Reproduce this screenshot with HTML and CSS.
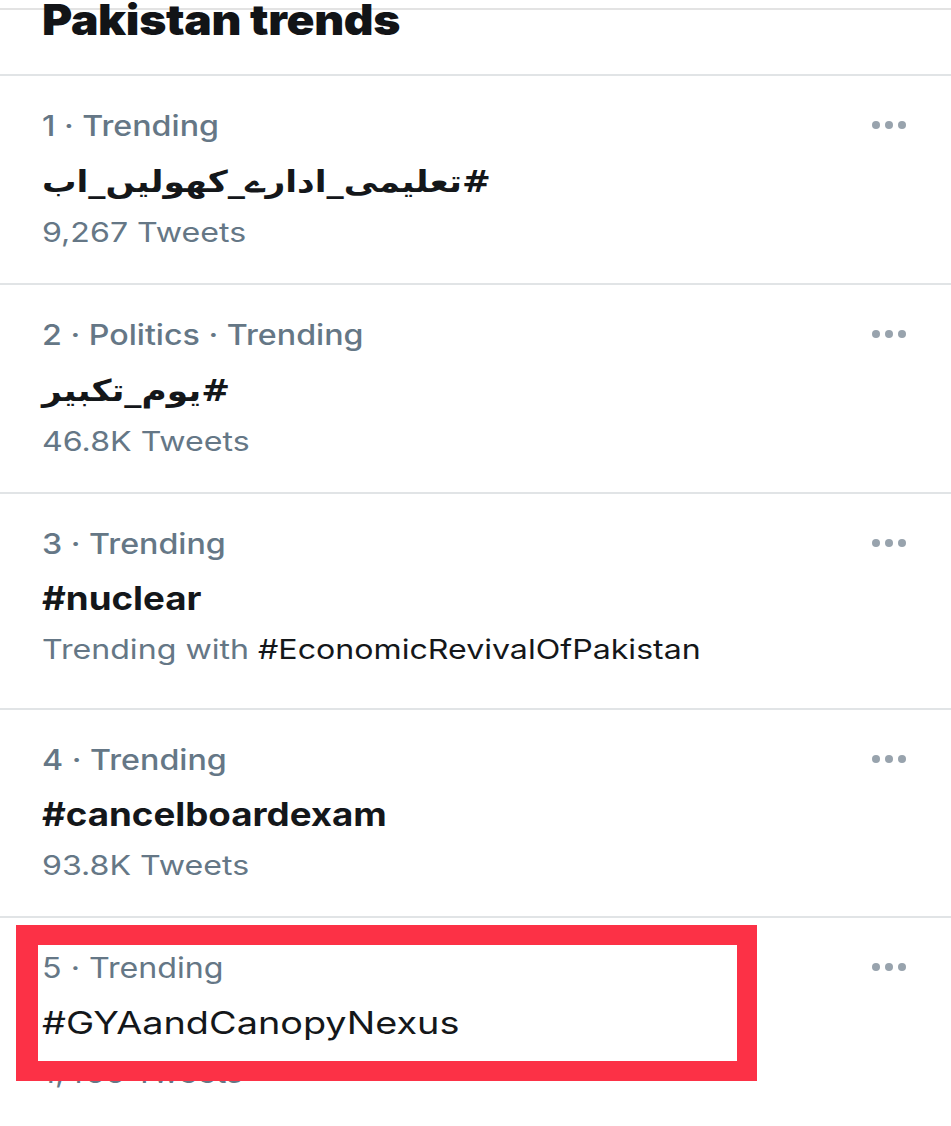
FILE: index.html
```html
<!DOCTYPE html>
<html lang="en">
<head>
<meta charset="utf-8">
<title>Pakistan trends</title>
<link rel="stylesheet" href="styles.css">
</head>
<body>
<div class="topline"></div>
<header class="header">
  <h1 class="title">Pakistan trends</h1>
</header>
<ul class="trends">
  <li class="trend">
    <div class="trend-body">
      <div class="meta">1 · Trending</div>
      <div class="tag"><span class="rtl" dir="rtl">#تعلیمی_ادارے_کھولیں_اب</span></div>
      <div class="count">9,267 Tweets</div>
    </div>
    <div class="more"><span></span><span></span><span></span></div>
  </li>
  <li class="trend">
    <div class="trend-body">
      <div class="meta">2 · Politics · Trending</div>
      <div class="tag"><span class="rtl" dir="rtl">#یوم_تکبیر</span></div>
      <div class="count">46.8K Tweets</div>
    </div>
    <div class="more"><span></span><span></span><span></span></div>
  </li>
  <li class="trend trend-tall">
    <div class="trend-body">
      <div class="meta">3 · Trending</div>
      <div class="tag">#nuclear</div>
      <div class="count">Trending with <span class="with">#EconomicRevivalOfPakistan</span></div>
    </div>
    <div class="more"><span></span><span></span><span></span></div>
  </li>
  <li class="trend">
    <div class="trend-body">
      <div class="meta">4 · Trending</div>
      <div class="tag">#cancelboardexam</div>
      <div class="count">93.8K Tweets</div>
    </div>
    <div class="more"><span></span><span></span><span></span></div>
  </li>
  <li class="trend trend-last">
    <div class="trend-body">
      <div class="meta meta-light">5 · Trending</div>
      <div class="tag tag-light">#GYAandCanopyNexus</div>
      <div class="count">1,466 Tweets</div>
    </div>
    <div class="more"><span></span><span></span><span></span></div>
    <div class="highlight"></div>
  </li>
</ul>
</body>
</html>
```
FILE: styles.css
```css
* { box-sizing: border-box; }

html, body {
  margin: 0;
  padding: 0;
  background: #ffffff;
}

body {
  position: relative;
  height: 1126px;
  overflow: hidden;
  font-family: Inter, "DejaVu Sans", "Noto Sans", sans-serif;
  color: #14171a;
}

.topline {
  position: absolute;
  top: 8px;
  left: 0;
  right: 0;
  height: 2px;
  background: #e3e3e3;
  z-index: 0;
}

.header {
  position: relative;
  z-index: 1;
  display: flow-root;
  height: 76px;
  padding-left: 42px;
  border-bottom: 2px solid #e1e4e6;
}

.title {
  margin: -1px 0 0 0;
  font-size: 42px;
  line-height: 42px;
  font-weight: 900;
  letter-spacing: -0.3px;
  color: #121417;
  transform: scaleX(1.1);
  transform-origin: 0 0;
}

.trends {
  list-style: none;
  margin: 0;
  padding: 0;
}

.trend {
  position: relative;
  display: flex;
  align-items: flex-start;
  padding: 30px 45px 34px 42px;
  border-bottom: 2px solid #e1e4e6;
}

.trend-tall {
  padding-bottom: 42px;
}

.trend-last {
  border-bottom: none;
}

.trend-body {
  flex: 1;
  white-space: nowrap;
}

.meta,
.tag,
.count {
  transform-origin: 0 50%;
}

.meta {
  font-size: 28px;
  line-height: 40px;
  font-weight: 500;
  color: #657786;
  transform: scaleX(1.15);
}

.meta-light {
  font-weight: 400;
}

.tag {
  font-size: 32px;
  line-height: 70px;
  font-weight: 700;
  color: #14171a;
  transform: scaleX(1.146);
}

.tag-light {
  font-weight: 400;
  font-size: 31px;
  transform: scaleX(1.22);
}

.rtl {
  display: inline-block;
  font-family: "DejaVu Sans", sans-serif;
  font-weight: 700;
  font-size: 30px;
}

.count {
  font-size: 27px;
  line-height: 32px;
  font-weight: 400;
  color: #657786;
  transform: scaleX(1.19);
}

.with {
  color: #14171a;
}

.more {
  display: flex;
  gap: 5px;
  margin-top: 15px;
}

.more span {
  width: 8px;
  height: 8px;
  border-radius: 50%;
  background: #98a3ad;
}

.highlight {
  position: absolute;
  top: 7px;
  left: 16px;
  width: 741px;
  height: 156px;
  border: 20px solid #fc3146;
  border-left-width: 22px;
}
```
